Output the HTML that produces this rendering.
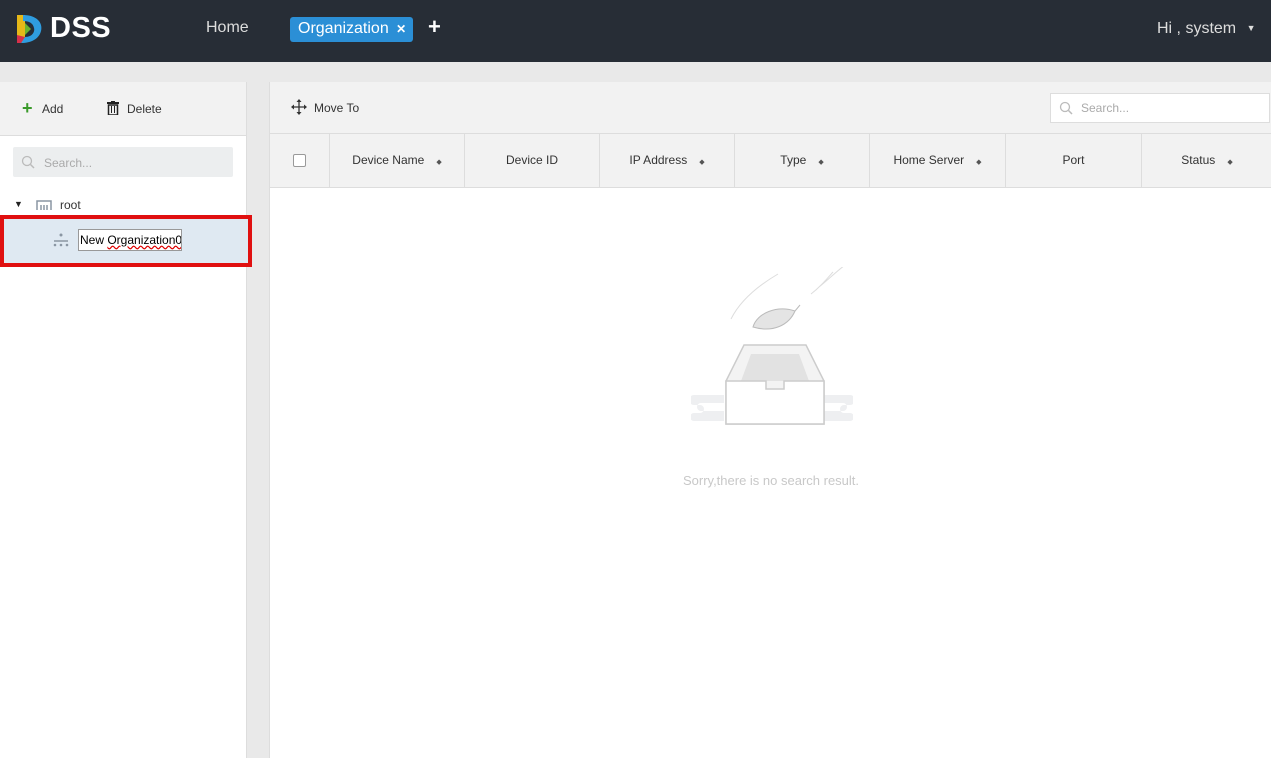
<!DOCTYPE html>
<html><head><meta charset="utf-8"><style>
*{margin:0;padding:0;box-sizing:border-box}
body{width:1271px;height:758px;overflow:hidden;background:#e9e9e9;font-family:"Liberation Sans",Arial,sans-serif;position:relative}
.abs{position:absolute}
#hdr{left:0;top:0;width:1271px;height:62px;background:#272d36}
#left{left:0;top:82px;width:247px;height:676px;background:#fff;border-right:1px solid #ddd}
#right{left:269px;top:82px;width:1002px;height:676px;background:#fff;border-left:1px solid #ddd}
.tb{background:#f2f2f2;border-bottom:1px solid #ddd}
.th{position:absolute;top:52px;height:54px;background:#f2f2f2;border-right:1px solid #ddd;border-bottom:1px solid #ddd;font-size:12px;color:#333;text-align:center;line-height:52px}
.sort{font-size:7px;color:#555;margin-left:12px}
</style></head><body>
<div id="hdr" class="abs">
 <svg class="abs" style="left:15px;top:13px" width="28" height="32" viewBox="0 0 28 32">
  <path d="M2 2 L10 2 L10 28 L2 30 Z" fill="#e6b818"/>
  <path d="M8 2 C22 2 28 10 26 18 C24 26 16 30 6 30 L10 24 C18 24 20 18 19 15 C18 10 14 8 8 8 Z" fill="#2f9de0"/>
  <path d="M2 22 L10 24 L6 30 L2 30Z" fill="#d6304a"/>
  <path d="M10 10 L16 16 L10 22Z" fill="#6ab42d"/>
 </svg>
 <div class="abs" style="left:50px;top:12px;color:#fff;font-weight:bold;font-size:29px;letter-spacing:0.5px">DSS</div>
 <div class="abs" style="left:206px;top:19px;color:#ddd;font-size:16px">Home</div>
 <div class="abs" style="left:290px;top:17px;width:123px;height:25px;background:#2b8fd6;border-radius:3px;color:#fff;font-size:16px;line-height:24px;padding-left:8px">Organization <span style="font-size:12px;margin-left:3px;font-weight:bold">✕</span></div>
 <div class="abs" style="left:428px;top:14px;color:#fff;font-size:22px;font-weight:bold">+</div>
 <div class="abs" style="left:1157px;top:20px;color:#ddd;font-size:16px">Hi , system <span style="font-size:9px;margin-left:6px;vertical-align:2px">▼</span></div>
</div>
<div id="left" class="abs">
 <div class="tb" style="height:54px;position:relative">
  <div class="abs" style="left:22px;top:18px;color:#3a9a2a;font-size:18px;font-weight:bold;line-height:16px">+</div>
  <div class="abs" style="left:42px;top:20px;font-size:12px;color:#333">Add</div>
  <svg class="abs" style="left:107px;top:19px" width="12" height="14" viewBox="0 0 12 14"><rect x="0" y="1" width="12" height="2" fill="#222"/><rect x="4" y="0" width="4" height="2" fill="#222"/><rect x="1.5" y="4" width="9" height="10" fill="none" stroke="#222" stroke-width="1.5"/><rect x="4" y="5" width="1" height="7" fill="#222"/><rect x="7" y="5" width="1" height="7" fill="#222"/></svg>
  <div class="abs" style="left:127px;top:20px;font-size:12px;color:#333">Delete</div>
 </div>
 <div class="abs" style="left:13px;top:65px;width:220px;height:30px;background:#eceeef;border-radius:2px">
  <svg class="abs" style="left:8px;top:8px" width="14" height="14"><circle cx="6" cy="6" r="4.5" fill="none" stroke="#bbb" stroke-width="1.3"/><line x1="9.5" y1="9.5" x2="13" y2="13" stroke="#bbb" stroke-width="1.5"/></svg>
  <div class="abs" style="left:31px;top:9px;font-size:12px;color:#aaa">Search...</div>
 </div>
 <div class="abs" style="left:14px;top:117px;font-size:9px;color:#222">▼</div>
 <svg class="abs" style="left:36px;top:116px" width="16" height="13"><path d="M1 12V3h14v9" fill="none" stroke="#8a96a3" stroke-width="1.5"/><path d="M5 7v5M8 7v5M11 7v5" stroke="#8a96a3" stroke-width="1.5"/></svg>
 <div class="abs" style="left:60px;top:116px;font-size:12px;color:#333">root</div>
 <div class="abs" style="left:0;top:133px;width:252px;height:52px;border:4px solid #e01010"></div>
 <div class="abs" style="left:4px;top:137px;width:244px;height:44px;background:#dfe9f2"></div>
 <svg class="abs" style="left:53px;top:151px" width="16" height="14"><circle cx="8" cy="2" r="1.5" fill="#8a96a3"/><path d="M1 8h14" stroke="#8a96a3" stroke-width="1.5"/><circle cx="2" cy="12" r="1.3" fill="#8a96a3"/><circle cx="8" cy="12" r="1.3" fill="#8a96a3"/><circle cx="14" cy="12" r="1.3" fill="#8a96a3"/></svg>
 <div class="abs" style="left:78px;top:147px;width:104px;height:22px;background:#fff;border:1px solid #999;font-size:12px;color:#000;line-height:20px;padding-left:1px;overflow:hidden;white-space:nowrap">New <span style="text-decoration:underline wavy #d00">Organization0</span></div>
</div>
<div id="right" class="abs">
 <div class="tb" style="height:52px;position:relative">
  <svg class="abs" style="left:21px;top:17px" width="16" height="16"><path d="M8 1v14M1 8h14" stroke="#333" stroke-width="1.3"/><path d="M8 0l-2.5 3h5zM8 16l-2.5-3h5zM0 8l3-2.5v5zM16 8l-3-2.5v5z" fill="#333"/></svg>
  <div class="abs" style="left:44px;top:19px;font-size:12px;color:#333">Move To</div>
  <div class="abs" style="left:780px;top:11px;width:220px;height:30px;background:#fff;border:1px solid #ddd">
   <svg class="abs" style="left:8px;top:7px" width="14" height="14"><circle cx="6" cy="6" r="4.5" fill="none" stroke="#bbb" stroke-width="1.3"/><line x1="9.5" y1="9.5" x2="13" y2="13" stroke="#bbb" stroke-width="1.5"/></svg>
   <div class="abs" style="left:30px;top:7px;font-size:12px;color:#aaa">Search...</div>
  </div>
 </div>
 <div class="th" style="left:0;width:60px"><span style="display:inline-block;width:13px;height:13px;border:1px solid #999;background:#fff;border-radius:2px;vertical-align:middle"></span></div>
 <div class="th" style="left:60px;width:135px">Device Name<span class="sort">◆</span></div>
 <div class="th" style="left:195px;width:135px">Device ID</div>
 <div class="th" style="left:330px;width:135px">IP Address<span class="sort">◆</span></div>
 <div class="th" style="left:465px;width:135px">Type<span class="sort">◆</span></div>
 <div class="th" style="left:600px;width:136px">Home Server<span class="sort">◆</span></div>
 <div class="th" style="left:736px;width:136px">Port</div>
 <div class="th" style="left:872px;width:130px;border-right:none">Status<span class="sort">◆</span></div>
 <svg class="abs" style="left:421px;top:185px" width="162" height="170" viewBox="0 0 162 170">
  <path d="M3 128h30v8H10a4 4 0 0 0 0 8h23v10H3a4 4 0 0 1 0-8h6a4 4 0 0 0 0-8H3a5 5 0 0 1 0-10z" fill="#eeeff1"/>
  <path d="M159 128h-30v8h23a4 4 0 0 1 0 8h-23v10h30a4 4 0 0 0 0-8h-6a4 4 0 0 1 0-8h6a5 5 0 0 0 0-10z" fill="#eeeff1"/>
  <path d="M40 52c10-20 30-35 47-45" stroke="#ddd" fill="none"/>
  <path d="M128 20c10-8 20-18 30-25M120 27c8-6 14-13 22-22" stroke="#ddd" fill="none"/>
  <path d="M62 60c4-14 24-22 42-16c-6 14-22 22-42 16z" fill="#e4e4e4" stroke="#bbb"/>
  <path d="M104 44l5-6" stroke="#bbb"/>
  <path d="M53 78h62l18 36v43H35v-43z" fill="#f3f3f3" stroke="#ccc" stroke-width="1.5"/>
  <path d="M60 87h48l10 27H50z" fill="#e2e2e2"/>
  <path d="M35 114h40v8h18v-8h40v43H35z" fill="#fff" stroke="#ccc" stroke-width="1.5"/>
 </svg>
 <div class="abs" style="left:0;width:1002px;top:391px;text-align:center;font-size:13px;color:#c8c8c8">Sorry,there is no search result.</div>
</div>
</body></html>
